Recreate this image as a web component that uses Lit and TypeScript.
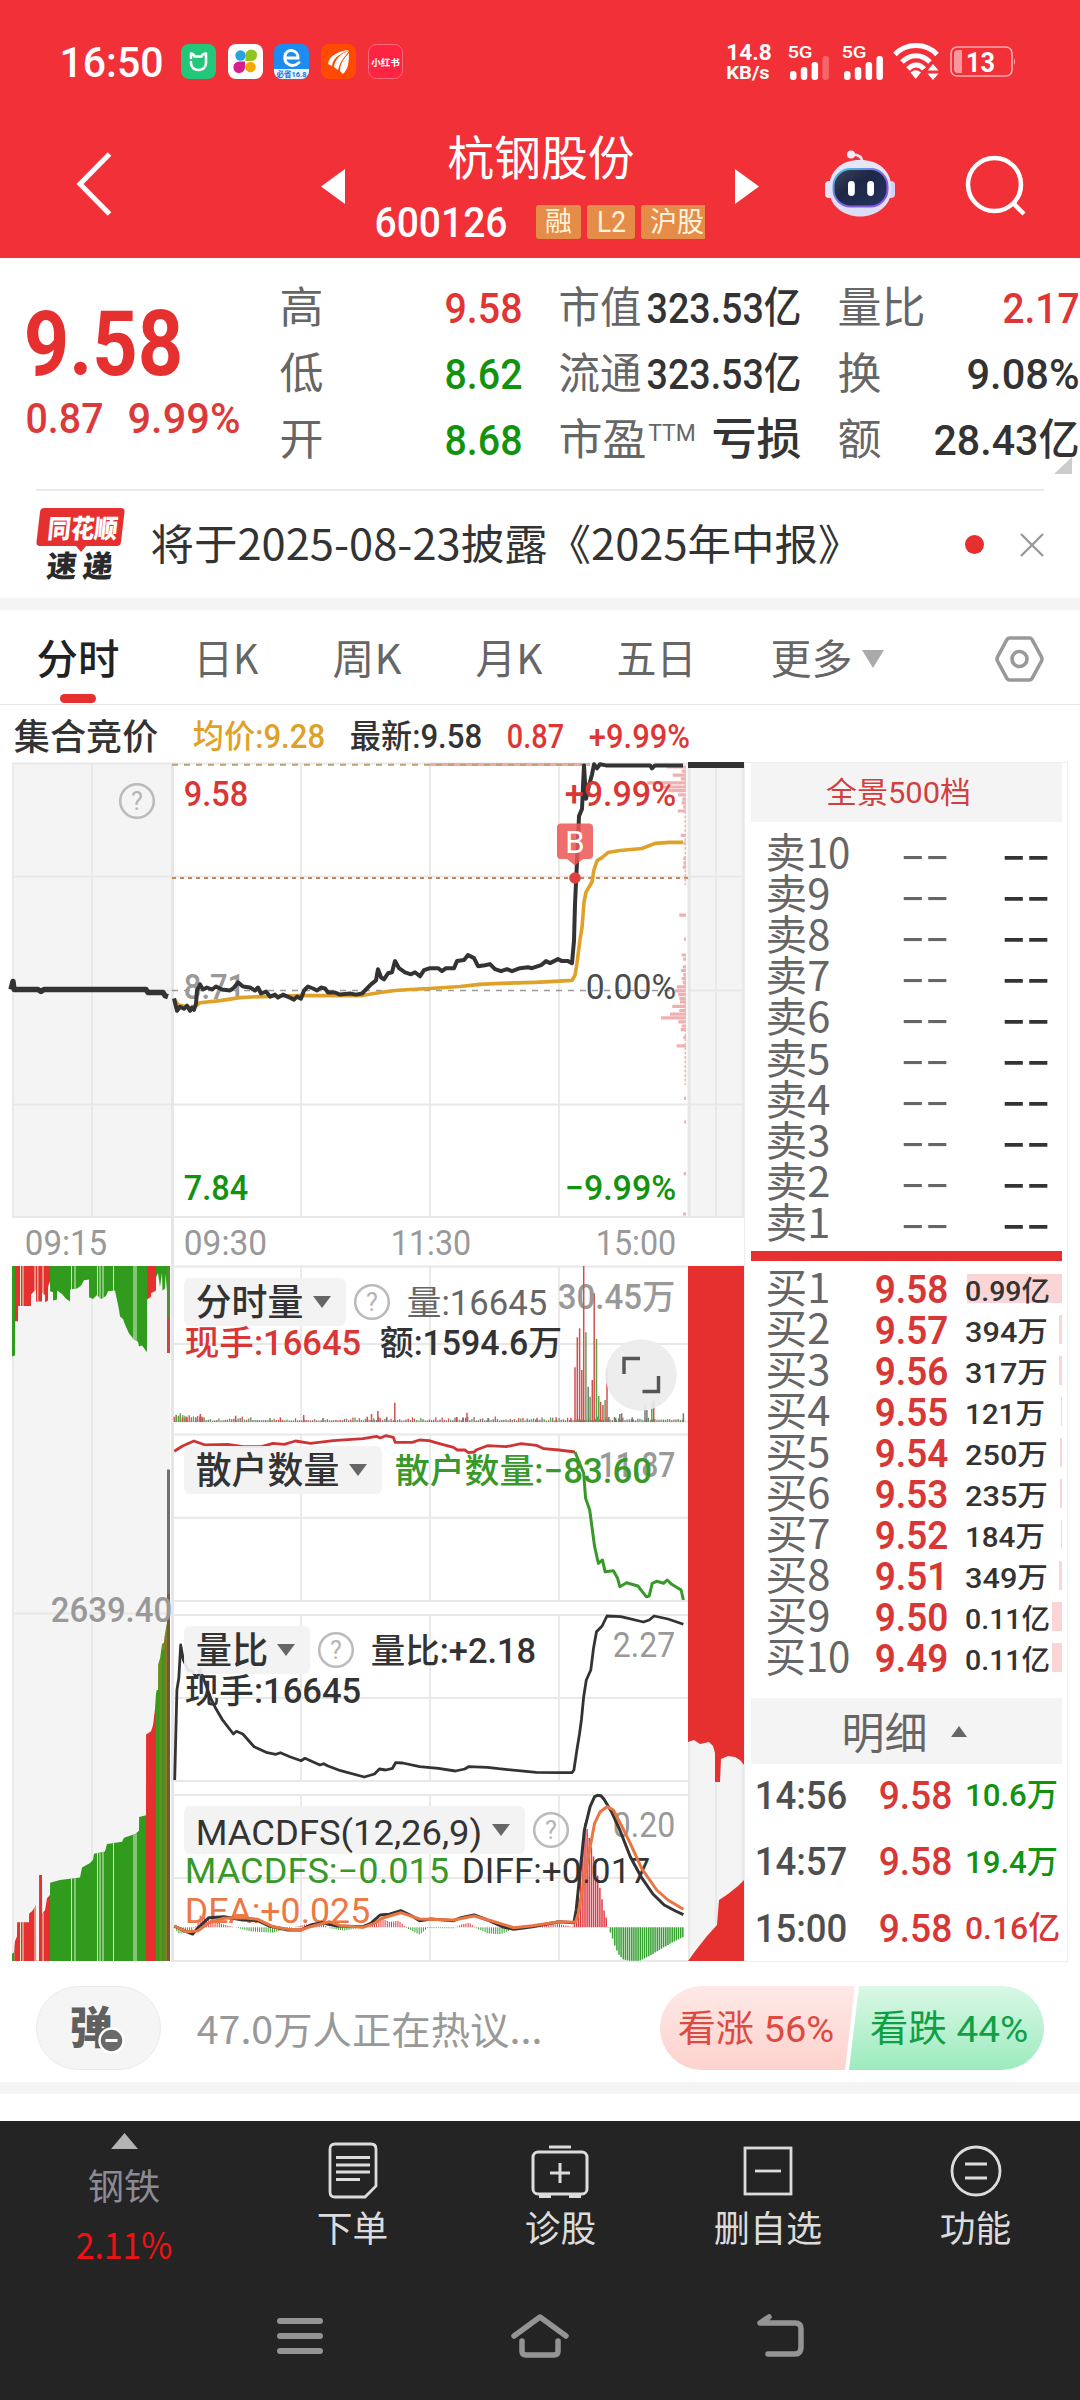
import { LitElement, html, svg, css } from "lit";
import { customElement } from "lit/decorators.js";

type Pt = [number, number];

/** Text set to an exact ink width, used for the condensed numerals. */
const fit = (text: string, w: number, size: number, cls = "") => html`<svg
  class="fit ${cls}" width=${w} height=${size} viewBox="0 0 ${w} ${size}">
  <text x=${-size * 0.035} y=${size * 0.86} font-size=${size}
    textLength=${w + size * 0.07} lengthAdjust="spacingAndGlyphs">${text}</text></svg>`;

/** The same for text inside a chart: x is the ink's left edge, y the baseline. */
const label = (text: string, x: number, right: number, y: number, cls: string, size = 34.5) => svg`<text
  class=${cls} x=${x - size * 0.035} y=${y} font-size=${size}
  textLength=${right - x + size * 0.07} lengthAdjust="spacingAndGlyphs">${text}</text>`;

const path = (pts: Pt[], fx = (n: number) => n, fy = (n: number) => n) =>
  "M" + pts.map(([x, y]) => `${fx(x).toFixed(1)} ${fy(y).toFixed(1)}`).join("L");

const at = (pts: Pt[], x: number) => {
  for (let i = 1; i < pts.length; i++) {
    if (x <= pts[i][0]) {
      const [x0, y0] = pts[i - 1];
      const [x1, y1] = pts[i];
      return x1 === x0 ? y1 : y0 + ((y1 - y0) * (x - x0)) / (x1 - x0);
    }
  }
  return pts[pts.length - 1][1];
};

const noise = (i: number) => {
  const s = Math.sin(i * 12.9898) * 43758.5453;
  return s - Math.floor(s);
};

const PRICE: Pt[] = [
  [174, 995], [177, 1007], [180, 1003], [184, 1005], [187, 1002], [190, 1007], [192, 1004], [194, 1006], [196, 1000],
  [197, 987], [200, 981], [203, 986], [207, 984], [212, 986], [216, 983], [222, 986], [230, 987], [234, 984], [238, 979],
  [243, 983], [250, 984], [255, 987], [258, 984], [261, 990], [266, 988], [270, 993], [275, 991], [278, 994], [283, 991],
  [290, 994], [294, 996], [297, 993], [301, 995], [304, 987], [308, 983], [313, 985], [317, 987], [321, 984], [325, 985],
  [328, 989], [335, 989], [340, 991], [350, 990], [356, 991], [362, 990], [366, 986], [371, 981], [376, 977], [378, 966],
  [381, 974], [384, 976], [388, 970], [392, 969], [395, 958], [399, 965], [405, 969], [411, 971], [415, 969], [420, 973],
  [424, 967], [430, 965], [438, 965], [442, 968], [446, 965], [454, 965], [457, 958], [464, 957], [468, 952], [474, 955],
  [478, 963], [485, 962], [490, 961], [495, 966], [501, 968], [507, 966], [512, 968], [520, 965], [528, 964], [532, 965],
  [541, 962], [546, 958], [550, 960], [554, 958], [558, 956], [562, 958], [568, 958], [572, 960], [574, 938], [575, 902],
  [577, 860], [579, 815], [582, 808], [584, 765], [586, 798], [589, 785], [592, 774], [594, 764], [597, 768], [600, 764],
  [606, 765], [650, 765], [652, 768], [655, 765], [683, 765],
];

const AVERAGE: Pt[] = [
  [174, 995], [178, 1001], [190, 1004], [196, 1002], [200, 999], [220, 997], [240, 994], [260, 993], [300, 992],
  [362, 992], [380, 989], [395, 987], [410, 986], [430, 985], [460, 983], [480, 981], [500, 980], [535, 979], [555, 978],
  [572, 977], [575, 972], [577, 960], [580, 937], [582, 925], [584, 900], [586, 890], [592, 880], [594, 868], [597, 859],
  [602, 856], [608, 851], [620, 849], [642, 847], [655, 842], [670, 841], [683, 841],
];

const AUCTION: Pt[] = [[11, 986], [13, 978], [14, 986], [38, 986], [41, 988], [44, 986], [146, 986], [148, 989], [163, 989], [165, 992], [168, 993]];

/* price distribution: [depth, left edge] */
const CHIPS: Pt[] = [
  [80, 920], [92, 965], [104, 938], [115, 962], [127, 862], [139, 905], [150, 925], [162, 955], [175, 967], [186, 965],
  [210, 953], [198, 970], [282, 962], [305, 970], [350, 970], [364, 970], [376, 968], [518, 958], [589, 972], [636, 965],
  [648, 970], [671, 968], [682, 963], [694, 970], [706, 965], [718, 968], [730, 950], [742, 945], [753, 955], [765, 958],
  [775, 960], [788, 937], [800, 958], [811, 930], [822, 903], [834, 955], [846, 965], [857, 962], [880, 970], [905, 950],
  [1060, 972], [1130, 972], [1283, 971], [1402, 969],
];

const RETAIL_UP: Pt[] = [
  [38, 604], [60, 588], [90, 573], [120, 585], [180, 583], [220, 590], [270, 590], [300, 580], [330, 583], [360, 573],
  [400, 580], [460, 572], [540, 566], [575, 559], [585, 564], [600, 557], [620, 562], [625, 577], [670, 577], [690, 570],
  [715, 572], [740, 580], [780, 592], [790, 600], [810, 600], [820, 608], [835, 606], [840, 600], [870, 587], [920, 590],
  [960, 581], [1000, 586], [1020, 596], [1060, 600], [1103, 606],
];
const RETAIL_DOWN: Pt[] = [
  [1103, 606], [1115, 640], [1126, 670], [1131, 745], [1142, 780], [1155, 890], [1165, 940], [1176, 930], [1183, 965],
  [1205, 962], [1216, 985], [1222, 1010], [1240, 998], [1270, 1008], [1292, 1040], [1300, 1038], [1308, 1000],
  [1320, 994], [1338, 1000], [1348, 990], [1360, 1003], [1385, 1020], [1391, 1050],
];
const RATIO: Pt[] = [
  [39, 540], [45, 270], [50, 235], [55, 135], [62, 180], [75, 210], [85, 213], [95, 228], [102, 225], [107, 208],
  [112, 225], [122, 255], [135, 295], [148, 325], [165, 358], [195, 402], [203, 394], [220, 402], [250, 440],
  [285, 458], [308, 463], [320, 458], [345, 470], [375, 482], [385, 475], [425, 495], [435, 491], [445, 497], [480, 512],
  [543, 531], [570, 522], [583, 507], [600, 510], [618, 505], [626, 488], [645, 489], [690, 500], [740, 505], [785, 513],
  [810, 507], [820, 500], [870, 502], [900, 506], [1000, 517], [1060, 518], [1095, 518], [1100, 510], [1108, 450],
  [1115, 400], [1120, 360], [1126, 290], [1133, 240], [1145, 210], [1152, 145], [1160, 95], [1175, 78], [1188, 48],
  [1225, 50], [1285, 66], [1300, 60], [1313, 48], [1350, 57], [1391, 73],
];
const DIFF: Pt[] = [
  [38, 978], [60, 990], [87, 1002], [100, 985], [130, 953], [170, 950], [220, 960], [260, 962], [290, 978], [340, 990],
  [375, 990], [400, 975], [430, 968], [470, 978], [540, 980], [560, 970], [585, 945], [610, 943], [640, 932], [670, 948],
  [690, 962], [720, 957], [780, 962], [800, 953], [835, 945], [870, 960], [910, 980], [940, 988], [990, 980],
  [1060, 965], [1100, 968], [1106, 930], [1115, 830], [1128, 690], [1143, 620], [1155, 590], [1163, 586], [1172, 587],
  [1180, 598], [1200, 635], [1220, 685], [1250, 770], [1280, 833], [1310, 882], [1340, 915], [1370, 933], [1391, 944],
];
const DEA: Pt[] = [
  [38, 978], [70, 995], [100, 993], [130, 968], [170, 955], [220, 953], [260, 958], [300, 980], [340, 988], [375, 990],
  [400, 980], [450, 965], [480, 977], [540, 982], [570, 970], [590, 955], [640, 938], [690, 957], [780, 960], [835, 948],
  [880, 962], [940, 983], [990, 977], [1060, 965], [1104, 967], [1112, 940], [1125, 850], [1140, 760], [1155, 670],
  [1170, 635], [1188, 620], [1205, 630], [1230, 685], [1250, 730], [1280, 805], [1320, 870], [1350, 900], [1391, 928],
];
const MACD_UP: Pt[] = [
  [1100, 978], [1109, 940], [1115, 860], [1120, 800], [1126, 665], [1132, 672], [1140, 710], [1150, 760], [1160, 805],
  [1170, 870], [1180, 930], [1190, 968],
];
const MACD_DOWN: Pt[] = [
  [1192, 984], [1200, 1005], [1208, 1035], [1218, 1062], [1230, 1078], [1245, 1082], [1275, 1082], [1290, 1074],
  [1310, 1062], [1330, 1048], [1360, 1028], [1391, 1011],
];
const MACD_SMALL: Pt[] = [
  [38, 984], [50, 1000], [75, 998], [95, 980], [107, 946], [130, 958], [170, 974], [200, 982], [240, 994], [300, 998],
  [340, 986], [385, 974], [430, 970], [448, 984], [490, 992], [520, 985], [560, 972], [585, 953], [610, 966], [635, 962],
  [655, 984], [690, 1004], [712, 984], [780, 985], [800, 974], [822, 968], [840, 984], [870, 1000], [905, 1003],
  [940, 986], [1000, 976], [1060, 972], [1095, 980],
];

/* hand-picked volume spikes: [x, depth, colour] */
const SPIKES: [number, number, string][] = [
  [43, 494, "g"], [49, 500, "g"], [54, 490, "g"], [60, 502, "r"], [66, 503, "g"], [71, 500, "r"], [95, 502, "r"],
  [107, 492, "r"], [113, 503, "r"], [201, 497, "r"], [292, 504, "g"], [320, 502, "r"], [382, 495, "r"], [433, 504, "k"],
  [551, 500, "r"], [562, 492, "r"], [568, 505, "g"], [579, 483, "r"], [585, 503, "r"], [602, 504, "k"], [624, 458, "r"],
  [788, 501, "r"], [805, 502, "k"], [816, 488, "r"], [872, 504, "k"], [1002, 503, "r"], [1053, 502, "r"],
  [1092, 503, "r"], [1103, 352, "r"], [1109, 262, "r"], [1115, 235, "r"], [1121, 360, "r"], [1126, 48, "r"],
  [1132, 247, "g"], [1138, 410, "k"], [1143, 440, "g"], [1149, 390, "r"], [1154, 130, "r"], [1160, 267, "g"],
  [1166, 438, "g"], [1171, 455, "r"], [1177, 465, "r"], [1183, 450, "g"], [1188, 355, "r"], [1193, 501, "k"],
  [1211, 503, "k"], [1222, 492, "k"], [1227, 490, "k"], [1255, 502, "k"], [1289, 462, "k"], [1294, 480, "k"],
  [1307, 456, "g"], [1312, 450, "r"], [1391, 490, "k"],
];

const TOP_BARS: Pt[] = [
  [12, 232], [15, 230], [15.1, 155], [18, 155], [18.1, 122], [31, 122], [31.1, 97], [36, 85], [36.1, 112], [42, 112],
  [42.1, 92], [45, 98], [45.1, 114], [48, 110], [48.1, 80], [50, 68], [50.1, 90], [53, 92], [53.1, 110], [57, 108],
  [57.1, 88], [62, 96], [66, 106], [70, 112], [70.1, 86], [77, 84], [81, 78], [84, 66], [89, 64], [89.1, 103],
  [93, 107], [97, 98], [101, 107], [106, 100], [108, 90], [115, 88], [119, 130], [120, 145], [123, 150], [125, 162],
  [129, 182], [134, 195], [138, 200], [139, 210], [142, 208], [146, 220], [147, 222], [147.1, 108], [151, 102],
  [151.1, 94], [156, 88], [156.1, 60], [158, 50], [160, 80], [162, 50], [162.5, 88], [165, 84], [165.5, 52], [167, 90],
];
const BOTTOM_BARS: Pt[] = [
  [12, 1533], [14, 1530], [15, 1505], [17, 1495], [17.1, 1464], [29, 1464], [29.1, 1445], [32, 1440], [36, 1428],
  [36.1, 1548], [39, 1548], [39.1, 1361], [42, 1361], [42.1, 1445], [45, 1438], [47, 1412], [50, 1405], [50.1, 1378],
  [60, 1372], [80, 1367], [82, 1345], [90, 1335], [93, 1328], [94, 1315], [105, 1310], [107, 1294], [122, 1289],
  [124, 1280], [135, 1272], [139, 1265], [139.1, 1235], [146, 1231], [146.1, 1055], [151, 1048], [153, 1035],
  [155, 1000], [156, 965], [158, 960], [158.1, 903], [160, 890], [162, 858], [164, 855], [165, 835], [167, 810],
];
const SLITS = [20.5, 23, 35, 37.8, 43, 71.5, 75, 97.5, 100, 103, 113.5, 134, 136];

const sx = (n: number) => 160 + n / 2.6576;
const upperY = (n: number) => 1250 + n / 3;
const lowerY = (n: number) => 1600 + n / 3;
const leftY = (n: number) => 1250 + n / 2.178;
const priceY = (n: number) => 740 + (n - 740) * 1.0142;

const area = (pts: Pt[], from: number, to: number, base: number) => {
  const inside = pts.filter(([x]) => x > from && x < to);
  return `${path([[from, at(pts, from + 0.01)], ...inside, [to, at(pts, to - 0.01)]], (n) => n, leftY)}L${to} ${base}L${from} ${base}Z`;
};

const help = (x: number, y: number) => svg`
  <circle class="ring" cx=${x} cy=${y} r="16.8" />
  <text class="ring-mark" x=${x} y=${y + 9} font-size="25" text-anchor="middle">?</text>`;

const pill = (text: string, x1: number, y: number, textRight: number) => svg`
  <rect class="pill" x="184" y=${y} width=${x1 - 184} height="48" rx="6" />
  ${label(text, 197, textRight, y + (text[0] === "M" ? 39 : 38), text[0] === "M" ? "ink thin" : "ink", text[0] === "M" ? 34.5 : 37)}
  <path class="dark" d="M${x1 - 33} ${y + 18}h18l-9 12z" />`;

const frame = (top: number, bottom: number) => svg`
  <path class="grid" d="M172 ${top}H688M172 ${bottom}H688M172 ${(top + bottom) / 2}H688
    M301 ${top}V${bottom}M430 ${top}V${bottom}M559 ${top}V${bottom}" />`;

@customElement("intraday-chart")
class IntradayChart extends LitElement {
  static styles = css`
    :host { display: block; width: 744px; height: 1200px; }
    svg { display: block; font-family: Roboto, "Noto Sans CJK SC", sans-serif; font-weight: 500; }
    .shade { fill: #f4f4f4; }
    .grid { fill: none; stroke: #e8e8e8; stroke-width: 1.8; }
    .ink { fill: #333; }
    .mid { fill: #666; font-weight: 400; }
    .zero { fill: #4c4c4c; font-weight: 400; }
    .soft { fill: #999; }
    .thin { font-weight: 400; }
    .up { fill: #d93636; }
    .down { fill: #12930f; }
    .leaf { fill: #38992a; }
    .dea { fill: #ee7843; }
    .dark { fill: #666; }
    .bar-r { fill: #e63030; }
    .bar-g { fill: #319b1d; }
    .line { fill: none; stroke: #333; stroke-linejoin: round; }
    .avg { stroke: #dfa127; }
    .s-up { stroke: #cf3434; }
    .s-down { stroke: #38992a; }
    .s-dea { stroke: #e97642; }
    .chips { stroke: #efb0b0; stroke-width: 3.2; fill: none; }
    .pill { fill: #f2f2f2; opacity: 0.93; }
    .ring { fill: none; stroke: #bbb; stroke-width: 2.6; }
    .ring-mark { fill: #b4b4b4; font-weight: 400; }
    .tag { fill: #ec5555; opacity: 0.85; }
    .tag-text { fill: #fff; font-weight: 400; }
    .v-r { stroke: #d05050; }
    .v-g { stroke: #5da348; }
    .v-k { stroke: #777; }
    .slit { stroke: #d8efd0; stroke-width: 1; }
  `;

  private priceChart() {
    return svg`
      <rect class="shade" x="12" y="763" width="160" height="454" />
      <rect class="shade" x="688" y="763" width="56" height="454" />
      <path class="grid" d="M12 763.5H744M12 876.5H744M12 990.5H172M688 990.5H744M12 1104.5H744M12 1217H744
        M13 763V1217M92 763V1217M301 763V1217M430 763V1217M559 763V1217M716 763V1217M743 763V1217" />
      <path d="M172.5 763V1962M689 763V1217" stroke="#e6e6e6" stroke-width="3" />
      <path d="M172 990.5H688" stroke="#999" stroke-width="1.4" stroke-dasharray="6 6" />
      <path d="M430 764.5H590" stroke="#efaaaa" stroke-width="3" />
      <path d="M172 764.8H590" stroke="#c0a070" stroke-width="2" stroke-dasharray="6 6" />
      <path d="M172 878H688" stroke="#cd8850" stroke-width="2" stroke-dasharray="4 4" />
      <path class="chips" d=${CHIPS.map(([v, x]) => `M${(360 + x / 3).toFixed(1)} ${(740 + v / 2.958).toFixed(1)}H686`).join("")} />
      <path d="M685.3 766V885M685.3 975V1085" stroke="#efb8b8" stroke-width="1.6" stroke-dasharray="3 1.5" />
      ${label("8.71", 185, 244, 999, "soft")}
      <path class="line" stroke-width="5.4" d=${path(AUCTION, undefined, priceY)} />
      <path class="line avg" stroke-width="3.6" d=${path(AVERAGE, undefined, priceY)} />
      <path class="line" stroke-width="4" d=${path(PRICE, undefined, priceY)} />
      <rect class="ink" x="688" y="762" width="56" height="6" />
      ${label("9.58", 185, 247, 806, "up")}
      ${label("+9.99%", 566, 675, 806, "up")}
      ${label("0.00%", 587, 675, 999, "zero")}
      ${label("7.84", 185, 247, 1200, "down")}
      ${label("−9.99%", 566, 675, 1200, "down")}
      ${label("09:15", 26, 106, 1255, "soft thin")}
      ${label("09:30", 185, 266, 1255, "soft thin")}
      ${label("11:30", 392, 470, 1255, "soft thin")}
      ${label("15:00", 597, 675, 1255, "soft thin")}
      ${help(137, 801)}
      <path class="tag" d="M561 823.5H589Q593 823.5 593 827.5V855Q593 859 589 859H583L575 865.5L567 859H561Q557 859 557 855V827.5Q557 823.5 561 823.5Z" />
      <text class="tag-text" x="575" y="852.5" font-size="31" text-anchor="middle">B</text>
      <circle cx="575" cy="878" r="5.8" fill="#e04040" />`;
  }

  private auctionBook() {
    const top = 1266;
    const base = 1961;
    return svg`
      <rect class="shade" x="12" y=${top} width="158" height=${base - top} />
      <path class="grid" d="M13 1266V1961M92 1266V1961M12 1613.5H172" />
      <path class="bar-g" d=${area(TOP_BARS, 12, 15, top)} />
      <path class="bar-r" d=${area(TOP_BARS, 15, 50, top)} />
      <path class="bar-g" d=${area(TOP_BARS, 50, 147, top)} />
      <path class="bar-r" d=${area(TOP_BARS, 147, 156, top)} />
      <path class="bar-g" d=${area(TOP_BARS, 156, 167, top)} />
      <path fill="#548d36" d="M167 1266h3v52h-3z" />
      <path fill="#cc4545" d="M167 1318h3v35h-3z" />
      <path class="bar-g" d=${area(BOTTOM_BARS, 12, 14.5, base)} />
      <path class="bar-r" d=${area(BOTTOM_BARS, 14.5, 50, base)} />
      <path class="bar-g" d=${area(BOTTOM_BARS, 50, 146, base)} />
      <path class="bar-r" d=${area(BOTTOM_BARS, 146, 156, base)} />
      <path fill="#6b8f22" d=${area(BOTTOM_BARS, 156, 167, base)} />
      <path d="M158 1690V1961M163 1650V1961" stroke="#319b1d" stroke-width="3" />
      <path d="M165.5 1636V1961" stroke="#c0562c" stroke-width="1.6" />
      ${SLITS.map((x) => svg`<path class="slit" d="M${x} 1266V${leftY(at(TOP_BARS, x)).toFixed(1)}M${x} ${leftY(at(BOTTOM_BARS, x)).toFixed(1)}V1961" />`)}
      <path fill="#707070" d="M167 1469.5h3v125h-3z" />
      <path fill="#75593f" d="M167 1594h3v367h-3z" />
      ${label("2639.40", 52, 171, 1622, "soft")}
      <path class="shade" d="M688 1266h56v695h-56z" />
      <path class="grid" d="M689 1266V1961M716 1740V1961M743 1740V1961" />
      <path class="bar-r" d="M688 1266H744V1765L740 1760L735 1757L728 1756L721 1759L720 1782H715V1753L713 1746L709 1742L700 1744L694 1740L688 1742Z" />
      <path class="bar-r" d="M688 1961L696 1950L707 1936L717 1925L719 1900L728 1894L738 1886L744 1880V1961Z" />`;
  }

  private volume() {
    const ticks = [];
    for (let i = 0; i < 240; i++) {
      const v = 38 + i * 5.65;
      const kind = noise(i) < 0.36 ? "r" : noise(i) < 0.7 ? "g" : "k";
      const rise = i < 15 ? 6 + noise(i + 9) * 8 : 3 + noise(i + 9) * noise(i + 5) * 9;
      ticks.push(svg`<path class="v-${kind}" stroke-width="1.3" d="M${sx(v).toFixed(1)} 1422v${(-rise / 2).toFixed(1)}" />`);
    }
    return svg`
      ${frame(1266.5, 1421.5)}
      ${ticks}
      ${label("30.45万", 559, 674, 1309, "soft")}
      ${SPIKES.map(([x, v, c]) => svg`<path class="v-${c}" stroke-width="1.5" d="M${sx(x).toFixed(1)} 1422V${upperY(v).toFixed(1)}" />`)}
      ${pill("分时量", 346, 1278, 302)}
      ${help(372, 1302)}
      ${label("量:16645", 408, 546, 1315, "mid")}
      ${label("现手:16645", 186, 360, 1355, "up")}
      ${label("额:1594.6万", 381, 561, 1355, "ink")}
      <circle cx="641" cy="1375" r="35.7" fill="#ebebeb" opacity="0.92" />
      <path d="M640 1358.5H624V1374M642.5 1391.5H658.5V1376" fill="none" stroke="#555" stroke-width="3.4" />`;
  }

  private retail() {
    return svg`
      ${frame(1434.5, 1601)}
      <path class="line s-up" stroke-width="2.8" d=${path(RETAIL_UP, sx, upperY)} />
      <path class="line s-down" stroke-width="3" d=${path(RETAIL_DOWN, sx, upperY)} />
      ${pill("散户数量", 382, 1446, 338)}
      ${label("11.87", 600, 674, 1477, "soft")}
      ${label("散户数量:−83.60", 396, 651, 1482.5, "leaf")}`;
  }

  private ratio() {
    return svg`
      ${frame(1615, 1781)}
      <path class="line" stroke-width="2.8" d=${path(RATIO, sx, lowerY)} />
      ${pill("量比", 310, 1626, 267)}
      ${help(336, 1650)}
      ${label("量比:+2.18", 372, 535, 1663, "ink")}
      ${label("2.27", 614, 674, 1657, "soft thin")}
      ${label("现手:16645", 186, 360, 1703, "ink")}`;
  }

  private macd() {
    const bars = [];
    for (let v = 39; v < 1392; v += 5.65) {
      const src = v < 1100 ? MACD_SMALL : v < 1191 ? MACD_UP : MACD_DOWN;
      const tip = at(src, v);
      const strong = v >= 1100;
      bars.push(svg`<path stroke=${tip < 982 ? "#e03a45" : "#35a030"} stroke-width=${strong ? 1.5 : 1}
        d="M${sx(v).toFixed(1)} 1927.3V${lowerY(tip).toFixed(1)}" />`);
    }
    return svg`
      ${frame(1795, 1961)}
      ${bars}
      ${label("0.20", 614, 674, 1837, "soft thin")}
      ${pill("MACDFS(12,26,9)", 525, 1806, 481)}
      ${help(551, 1830)}
      ${label("MACDFS:−0.015", 186, 448, 1883, "leaf thin")}
      ${label("DIFF:+0.017", 463, 649, 1883, "ink thin")}
      ${label("DEA:+0.025", 186, 369, 1922.7, "dea thin")}
      <path class="line" stroke-width="3" d=${path(DIFF, sx, lowerY)} />
      <path class="line s-dea" stroke-width="3" d=${path(DEA, sx, lowerY)} />`;
  }

  render() {
    return html`<svg width="744" height="1200" viewBox="0 762 744 1200">
      ${this.priceChart()} ${this.auctionBook()} ${this.volume()} ${this.retail()} ${this.ratio()} ${this.macd()}
    </svg>`;
  }
}

const BUYS: [string, string, number, number][] = [
  ["9.58", "0.99亿", 83, 95], ["9.57", "394万", 81, 3], ["9.56", "317万", 81, 3], ["9.55", "121万", 78, 1],
  ["9.54", "250万", 81, 2], ["9.53", "235万", 81, 2], ["9.52", "184万", 78, 1], ["9.51", "349万", 81, 3],
  ["9.50", "0.11亿", 83, 10], ["9.49", "0.11亿", 83, 10],
];
const TRADES: [string, string, string, number][] = [
  ["14:56", "10.6万", "down", 91], ["14:57", "19.4万", "down", 91], ["15:00", "0.16亿", "up", 93],
];

@customElement("order-book")
class OrderBook extends LitElement {
  static styles = css`
    :host { display: block; box-sizing: border-box; width: 324px; height: 1200px; padding: 0 6px; border: 1px solid #eee;
      font-family: Roboto, "Noto Sans CJK SC", sans-serif; color: #666; background: #fff; }
    .fit { display: block; flex: none; overflow: visible; fill: currentColor; }
    .head { height: 59px; width: 311px; background: #f4f4f4; display: flex; align-items: center; justify-content: center;
      padding-right: 16px; box-sizing: border-box; color: #d04040; }
    .sells { padding-top: 11px; }
    .row { display: flex; align-items: center; height: 41.1px; width: 311px; padding-left: 16px; box-sizing: border-box; }
    .lead { width: 133px; flex: none; font-family: "Noto Sans CJK SC", sans-serif; }
    .sells .lead { width: 135px; }
    .dash { width: 101px; flex: none; font-family: "Noto Sans CJK SC", sans-serif; }
    .dash.strong { width: 46px; color: #333; font-weight: 500; }
    .rule { width: 311px; height: 10px; background: #e63030; margin: 7px 0 7px; }
    .buys .row { height: 41px; }
    .buys .lead { width: 109px; }
    .price { width: 90px; flex: none; color: #d93636; font-weight: 600; }
    .amount { flex: 1; height: 29px; display: flex; align-items: center; justify-content: space-between; position: relative; }
    .amount .fit { position: relative; top: 2px; color: #333; font-weight: 500; }
    .depth { position: absolute; right: 0; top: 0; height: 29px; background: #fad5d5; }
    .detail { margin-top: 20px; height: 66px; width: 311px; background: #f4f4f4; display: flex; align-items: center;
      gap: 25px; padding: 5px 0 0 92px; box-sizing: border-box; }
    .caret { border: 8px solid transparent; border-top: 0; border-bottom: 11px solid #666; margin-top: -4px; }
    .trades { margin-top: -3px; }
    .trade { display: flex; align-items: center; height: 66.5px; padding-left: 5px; font-weight: 500; color: #4f4f4f; }
    .trade .cell-time { width: 124px; }
    .trade .cell-price { width: 86px; color: #d93636; }
    .up { color: #d93636; }
    .down { color: #12930f; }
  `;

  render() {
    return html`
      <div class="head">${fit("全景500档", 143, 29.5)}</div>
      <div class="sells">
        ${[10, 9, 8, 7, 6, 5, 4, 3, 2, 1].map((n) => html`<div class="row">
          <div class="lead">${fit("卖" + n, n > 9 ? 82 : 62, 41)}</div>
          <div class="dash">${fit("--", 46, 44)}</div>
          <div class="dash strong">${fit("--", 46, 44)}</div>
        </div>`)}
      </div>
      <div class="rule"></div>
      <div class="buys">
        ${BUYS.map(([price, amount, w, depth], i) => html`<div class="row">
          <div class="lead">${fit("买" + (i + 1), i > 8 ? 82 : 62, 41)}</div>
          <div class="price">${fit(price, 71, 39)}</div>
          <div class="amount"><div class="depth" style="width:${depth}px"></div>${fit(amount, w, 28.5)}</div>
        </div>`)}
      </div>
      <div class="detail">${fit("明细", 83, 43)}<span class="caret"></span></div>
      <div class="trades">
        ${TRADES.map(([time, amount, dir, w]) => html`<div class="trade">
          <div class="cell-time">${fit(time, 90, 39)}</div>
          <div class="cell-price">${fit("9.58", 71, 39)}</div>
          <div class=${dir}>${fit(amount, w, 32)}</div>
        </div>`)}
      </div>`;
  }
}

const signal = (full: boolean) => html`<span class="signal">${fit("5G", 24, 17)}<svg width="39" height="24" viewBox="0 0 39 24" fill="#fff">
  <rect y="15" width="6.5" height="9" rx="3" /><rect x="10.8" y="11" width="6.5" height="13" rx="3" />
  <rect x="21.6" y="6" width="6.5" height="18" rx="3" /><rect x="32.4" width="6.5" height="24" rx="3" opacity=${full ? 1 : 0.25} /></svg></span>`;

const TABS: [string, number][] = [["分时", 80], ["日K", 62], ["周K", 66], ["月K", 64], ["五日", 77], ["更多", 79]];

@customElement("app-root")
class AppRoot extends LitElement {
  static styles = css`
    :host { display: block; width: 1080px; height: 2400px; overflow: hidden; background: #fff;
      font-family: Roboto, "Noto Sans CJK SC", sans-serif; color: #333; }
    svg { display: block; flex: none; }
    .fit { overflow: visible; fill: currentColor; }
    .cjk { font-family: "Noto Sans CJK SC", sans-serif; }
    .up { color: #e03535; }
    .down { color: #12930f; }
    .top { background: #f13038; color: #fff; height: 258px; }
    .status { display: flex; align-items: center; height: 122px; padding: 0 64px 0 61px; box-sizing: border-box; font-weight: 500; }
    .apps { display: flex; gap: 11.7px; margin-left: 19px; flex: 1; }
    .speed { display: flex; flex-direction: column; font-weight: 700; margin-right: 17px; }
    .signal { display: flex; flex-direction: column; height: 37px; justify-content: space-between; margin-right: 13px; }
    .signal svg:last-child { margin: -6px 0 0 2px; }
    .wifi { margin: 0 11px 0 -3px; }
    .bar { display: flex; align-items: center; height: 124px; padding-left: 76px; }
    .prev { margin: 5px 0 0 209px; }
    .next { margin: 5px 0 0 30px; }
    .name { width: 329px; height: 110px; margin-left: 31px; padding-top: 6px; display: flex; flex-direction: column; align-items: center; box-sizing: border-box; }
    .code { display: flex; align-items: center; align-self: stretch; margin-top: 18px; gap: 6px; }
    .code > .fit { margin-right: 24px; font-weight: 500; }
    .badge { height: 34px; border-radius: 3px; background: #e58d48; color: #fff3dc; display: flex; align-items: center; justify-content: center; }
    .badge.rong { width: 45px; }
    .badge.level { width: 48px; }
    .badge.hu { width: 64px; border-radius: 3px 0 0 3px; justify-content: flex-start; padding-left: 10px; box-sizing: border-box; }
    .robot { margin-left: 65px; }
    .search { margin-left: 67px; }
    .quote { display: grid; grid-template-columns: 254px 240px 39px 240px 39px 239px; height: 231px; padding: 16px 0 17px 27px;
      box-sizing: border-box; position: relative; }
    .last { padding-top: 23px; font-weight: 700; color: #e63030; }
    .change { display: flex; gap: 27px; margin-top: 8px; color: #dc3a3a; font-weight: 500; }
    .metrics { display: grid; grid-template-rows: repeat(3, 66px); }
    .metric { display: flex; align-items: center; justify-content: space-between; color: #666; }
    .metric > .fit:last-child { font-weight: 500; }
    .metric .ink { color: #333; }
    .pe { display: flex; gap: 4px; }
    .pe .fit:last-child { margin-top: 3px; }
    .corner { position: absolute; right: 8px; bottom: 15px; }
    .news { display: flex; align-items: center; height: 109px; margin: 0 36px; border-top: 2px solid #ebebeb; box-sizing: border-box; }
    .headline { margin-left: 27px; flex: 1; }
    .dot { width: 19px; height: 19px; border-radius: 50%; background: #e63030; margin-right: 36px; }
    .band { height: 12px; background: #f4f4f4; }
    .tabs { display: flex; align-items: center; height: 95px; padding: 4px 36px 0 38px; border-bottom: 1.5px solid #e6e6e6; box-sizing: border-box; color: #666; }
    .tab { position: relative; margin-right: 77px; }
    .tab.on { color: #222; font-weight: 500; }
    .tab.on::after { content: ""; position: absolute; left: 22px; top: 55px; width: 36px; height: 9px; border-radius: 5px; background: #e63030; }
    .tab:last-of-type { margin-right: 11px; }
    .gear { margin-left: auto; }
    .legend { display: flex; align-items: center; height: 57px; padding: 6px 0 0 15px; gap: 27px; box-sizing: border-box; font-weight: 500; }
    .legend .avg { color: #dfa127; margin-left: 10px; }
    .board { display: flex; height: 1200px; }
    .talk { display: flex; align-items: center; height: 120px; padding: 12px 36px 0; box-sizing: border-box; }
    .danmu { width: 125px; height: 84px; border-radius: 42px; background: #f5f5f5; border: 1px solid #ebebeb; box-sizing: border-box;
      display: flex; align-items: center; padding-left: 34px; position: relative; color: #606060; font-weight: 900; }
    .mute { position: absolute; left: 61px; top: 40px; }
    .hot { color: #999; margin-left: 37px; padding-top: 3px; flex: 1; }
    .votes { display: flex; width: 384px; height: 84px; border-radius: 42px; overflow: hidden; }
    .vote { display: flex; align-items: center; box-sizing: border-box; }
    .bull { width: 199px; padding-left: 19px; color: #dd4b40; background: linear-gradient(#fee9e7, #fdd2cd); clip-path: polygon(0 0, 195px 0, 185px 100%, 0 100%); }
    .bear { width: 199px; margin-left: -14px; padding-left: 26px; color: #0fa045; background: linear-gradient(#daf8e6, #9cebbe); clip-path: polygon(14px 0, 100% 0, 100% 100%, 4px 100%); }
    .gap { height: 27px; }
    .dock { height: 279px; background: #242424; color: #dcdcdc; }
    .tools { display: grid; grid-template-columns: 248px 209px 206px 210px 205px; height: 160px; }
    .tool { display: flex; flex-direction: column; align-items: center; padding-top: 21px; gap: 12px; }
    .sector { display: flex; flex-direction: column; align-items: center; padding-top: 12px; color: #8b8a95; }
    .sector .fit:nth-child(2) { margin-top: 20px; }
    .sector .fit:nth-child(3) { margin-top: 22px; color: #f01212; }
    .keys { display: flex; align-items: center; padding: 32px 0 0 277px; }
    .keys svg + svg { margin-left: 188px; }
    .keys svg:last-child { margin-left: 187px; }
  `;

  private statusBar() {
    return html`<div class="status">
      ${fit("16:50", 101, 43)}
      <div class="apps">
        <svg width="35" height="35" viewBox="0 0 35 35"><rect width="35" height="35" rx="8" fill="#22c77a" />
          <path d="M10 9.5V14M10 9.5C12 9.5 13 11 13.5 12.5H20.5C21 11 22 9.5 25 9.5V19C25 23.5 21.5 26 17.5 26C13.5 26 10 23.5 10 19V18" fill="none" stroke="#fff" stroke-width="2.6" stroke-linecap="round" stroke-linejoin="round" /></svg>
        <svg width="35" height="35" viewBox="0 0 35 35"><rect width="35" height="35" rx="8" fill="#fff" />
          <circle cx="12.5" cy="11.5" r="5.2" fill="#27a4e0" /><path d="M17.5 17V11.5A5.8 5.8 0 1 1 23 17Z" fill="#8fc31f" />
          <path d="M17 17.5V23A5.8 5.8 0 1 1 11.5 17.5Z" fill="#d81e8a" /><circle cx="22.5" cy="23" r="5.2" fill="#f6a800" /></svg>
        <svg width="35" height="35" viewBox="0 0 35 35"><rect width="35" height="35" rx="8" fill="#1d8cf0" />
          <path d="M0 25H35V27A8 8 0 0 1 27 35H8A8 8 0 0 1 0 27Z" fill="#eaf5ff" />
          <path d="M12 14H24C24.5 5.5 12.500 3.500 11 12C9.500 20.500 19 24.500 25 18.500" fill="none" stroke="#fff" stroke-width="3" stroke-linecap="round" />
          <text x="17.5" y="33" font-size="7.5" font-weight="700" text-anchor="middle" fill="#1d6fe0">必省16.8</text></svg>
        <svg width="35" height="35" viewBox="0 0 35 35"><rect width="35" height="35" rx="8" fill="#ff4a00" />
          <path d="M7 20C8 12 17 7 28 6C22 9 12 12 11 22ZM13 23C14 15 20 9 28 7C24 13 20 15 17 26ZM19 27C19 20 23 14 28 9C28 18 27 26 22 30Z" fill="#fff" /></svg>
        <svg width="35" height="35" viewBox="0 0 35 35"><rect x=".5" y=".5" width="34" height="34" rx="8" fill="#ff2442" stroke="#ff6a78" />
          <text x="17.5" y="21.500" font-size="9.5" font-weight="700" text-anchor="middle" fill="#fff">小红书</text></svg>
      </div>
      <div class="speed">${fit("14.8", 44, 22)}${fit("KB/s", 42, 19)}</div>
      ${signal(false)}${signal(true)}
      <svg class="wifi" width="46" height="38" viewBox="0 0 46 38"><g fill="none" stroke="#fff" stroke-width="5">
        <path d="M2 12.5C13 .5 33 .5 44 12.5" /><path d="M9 20C17 11.5 29 11.5 37 20" /><path d="M15 27C20 21.5 27 21.5 31 27" /></g>
        <path d="M17.5 30.5Q22.5 26 28 30.5L22.7 37Z" fill="#fff" />
        <path d="M40 22l5.500 6.500h-11zM40 38l5.500-6.500h-11z" fill="#fff" /></svg>
      <svg width="66" height="31" viewBox="0 0 66 31"><rect x="1" y="1" width="61" height="29" rx="6" fill="none" stroke="#fff" stroke-opacity=".6" stroke-width="1.6" />
        <path d="M4 8Q4 4 8 4H12V27H8Q4 27 4 23Z" fill="#fff" opacity=".5" /><path d="M64 12Q66 15.500 64 19Z" fill="#fff" opacity=".6" />
        <text x="16" y="25.5" font-size="27" font-weight="700" fill="#fff" textLength="29" lengthAdjust="spacingAndGlyphs">13</text></svg>
    </div>`;
  }

  private titleBar() {
    return html`<div class="bar">
      <svg width="36" height="66" viewBox="0 0 36 66"><path d="M33.5 3L4 33L33.5 63" fill="none" stroke="#fff" stroke-width="5" /></svg>
      <svg class="prev" width="24" height="35" viewBox="0 0 24 35"><path d="M24 0V35L0 17.5Z" fill="#fff" /></svg>
      <div class="name">
        ${fit("杭钢股份", 184, 47)}
        <div class="code">${fit("600126", 130, 43)}
          <span class="badge rong">${fit("融", 25, 27)}</span><span class="badge level">${fit("L2", 27, 29)}</span><span
            class="badge hu">${fit("沪股", 52, 28)}</span></div>
      </div>
      <svg class="next" width="24" height="35" viewBox="0 0 24 35"><path d="M0 0V35L24 17.5Z" fill="#fff" /></svg>
      <svg class="robot" width="72" height="68" viewBox="0 0 72 68">
        <defs>
          <linearGradient id="face" x1="0" y1="0" x2="1" y2="1"><stop stop-color="#424659" /><stop offset=".4" stop-color="#1d2747" /><stop offset="1" stop-color="#26345e" /></linearGradient>
          <linearGradient id="rim" x1="0" y1="0" x2="1" y2="1"><stop stop-color="#3fd2ee" /><stop offset=".45" stop-color="#7b6ae2" /><stop offset="1" stop-color="#8a55e6" /></linearGradient>
          <linearGradient id="shell" x1="0" y1="0" x2="0" y2="1"><stop stop-color="#e9e7f4" /><stop offset="1" stop-color="#dcdcf8" /></linearGradient>
        </defs>
        <path d="M38 12C38.500 7 34 4.500 29 4.500" fill="none" stroke="#e6e2f4" stroke-width="2.600" /><circle cx="27" cy="4.500" r="4" fill="#eeecf6" />
        <rect x="1" y="31" width="8" height="17" rx="4" fill="#e6e4f8" /><rect x="63" y="31" width="8" height="17" rx="4" fill="#d4d2f4" />
        <path d="M36 10C54 10 67 20 67.500 38C68 56 52 66.500 36 66.500C20 66.500 4.500 56 5 38C5.500 20 18 10 36 10Z" fill="url(#shell)" />
        <rect x="9.500" y="19" width="54" height="37.500" rx="17" fill="url(#face)" stroke="url(#rim)" stroke-width="2" />
        <rect x="24" y="31" width="6.800" height="15" rx="3.400" fill="#fff" /><rect x="43.200" y="31" width="6.800" height="15" rx="3.400" fill="#fff" /></svg>
      <svg class="search" width="64" height="64" viewBox="0 0 64 64"><circle cx="31.5" cy="32.5" r="26.500" fill="none" stroke="#fff" stroke-width="4.500" />
        <path d="M50.500 51.500L61 62" stroke="#fff" stroke-width="4.500" /></svg>
    </div>`;
  }

  render() {
    return html`
      <header class="top">${this.statusBar()}${this.titleBar()}</header>
      <section class="quote">
        <div class="last">${fit("9.58", 153, 91)}<div class="change">${fit("0.87", 75, 43)}${fit("9.99%", 110, 43)}</div></div>
        <div class="metrics">
          <div class="metric">${fit("高", 41, 43)}${fit("9.58", 75, 43, "up")}</div>
          <div class="metric">${fit("低", 41, 43)}${fit("8.62", 75, 43, "down")}</div>
          <div class="metric">${fit("开", 41, 43)}${fit("8.68", 75, 43, "down")}</div>
        </div>
        <span></span>
        <div class="metrics">
          <div class="metric">${fit("市值", 80, 43)}${fit("323.53亿", 152, 43, "ink")}</div>
          <div class="metric">${fit("流通", 80, 43)}${fit("323.53亿", 152, 43, "ink")}</div>
          <div class="metric"><span class="pe">${fit("市盈", 85, 43)}${fit("TTM", 46, 23)}</span>${fit("亏损", 87, 44, "ink")}</div>
        </div>
        <span></span>
        <div class="metrics">
          <div class="metric">${fit("量比", 85, 43)}${fit("2.17", 74, 43, "up")}</div>
          <div class="metric">${fit("换", 41, 43)}${fit("9.08%", 110, 43, "ink")}</div>
          <div class="metric">${fit("额", 41, 43)}${fit("28.43亿", 143, 43, "ink")}</div>
        </div>
        <svg class="corner" width="18" height="17" viewBox="0 0 18 17"><path d="M18 0V17H0Z" fill="#ccc" /></svg>
      </section>
      <section class="news">
        <svg width="89" height="74" viewBox="0 0 89 74">
          <path d="M8 0H85Q89 0 88.500 4L85 34Q84.500 38 81 38H50L45 44L40 38H4Q0 38 .5 34L4 4Q4.500 0 8 0Z" fill="#e63030" />
          <g font-family="Noto Sans CJK SC" font-weight="900"><text x="14" y="30" font-size="26" fill="#fff" textLength="70" lengthAdjust="spacingAndGlyphs" transform="skewX(-6)">同花顺</text>
          <text x="17" y="69" font-size="30" fill="#2a2a2a" textLength="66" transform="skewX(-6)">速递</text></g></svg>
        <div class="headline cjk">${fit("将于2025-08-23披露《2025年中报》", 708, 42.5)}</div>
        <span class="dot"></span>
        <svg width="24" height="24" viewBox="0 0 24 24"><path d="M1 1L23 23M23 1L1 23" stroke="#999" stroke-width="2.400" /></svg>
      </section>
      <div class="band"></div>
      <nav class="tabs cjk">
        ${TABS.map(([t, w], i) => html`<div class="tab ${i === 0 ? "on" : ""}">${fit(t, w, 41)}</div>`)}
        <svg width="22" height="18" viewBox="0 0 22 18"><path d="M0 0H22L11 18Z" fill="#aaa" /></svg>
        <svg class="gear" width="49" height="46" viewBox="0 0 49 46"><path d="M14.500 2H34.500Q36 2 37 3.500L46.500 21Q47.500 23 46.500 25L37 42.500Q36 44 34.500 44H14.500Q13 44 12 42.500L2.500 25Q1.500 23 2.500 21L12 3.500Q13 2 14.500 2Z" fill="none" stroke="#999" stroke-width="3.600" />
          <circle cx="24.500" cy="23" r="7.500" fill="none" stroke="#999" stroke-width="3.600" /></svg>
      </nav>
      <div class="legend">${fit("集合竞价", 142, 36)}
        <span class="avg">${fit("均价:9.28", 130, 32.5)}</span>${fit("最新:9.58", 130, 32.5)}${fit("0.87", 55, 32.5, "up")}${fit("+9.99%", 99, 32.5, "up")}</div>
      <section class="board"><intraday-chart></intraday-chart><order-book></order-book></section>
      <section class="talk">
        <div class="danmu cjk">${fit("弹", 40, 44)}
          <svg class="mute" width="27" height="27" viewBox="0 0 27 27"><circle cx="13.500" cy="13.500" r="12" fill="#6a6a6a" stroke="#fff" stroke-width="2.500" /><path d="M7.500 13.500H19.500" stroke="#fff" stroke-width="3" /></svg></div>
        <div class="hot cjk">${fit("47.0万人正在热议...", 343, 38)}</div>
        <div class="votes"><div class="vote bull">${fit("看涨 56%", 154, 37)}</div><div class="vote bear">${fit("看跌 44%", 156, 37)}</div></div>
      </section>
      <div class="band"></div>
      <div class="gap"></div>
      <footer class="dock">
        <div class="tools cjk">
          <div class="sector"><svg width="27" height="16" viewBox="0 0 27 16"><path d="M13.500 0L27 16H0Z" fill="#b4b4b4" /></svg>
            ${fit("钢铁", 70, 36)}${fit("2.11%", 94, 37)}</div>
          <div class="tool"><svg width="50" height="57" viewBox="0 0 50 57" fill="none" stroke="#dcdcdc" stroke-width="2.800">
            <path d="M7 2H43Q48 2 48 7V44L37 55H7Q2 55 2 50V7Q2 2 7 2ZM8 15.500H42M8 23H42M8 30H42M8 37.500H32" /></svg>${fit("下单", 69, 36)}</div>
          <div class="tool"><svg width="58" height="57" viewBox="0 0 58 57" fill="none" stroke="#dcdcdc" stroke-width="3">
            <rect x="2" y="10" width="54" height="42" rx="5" /><path d="M18 5H40M19 31H39M29 21V41M8 54.500H20M38 54.500H50" /></svg>${fit("诊股", 69, 36)}</div>
          <div class="tool"><svg width="50" height="57" viewBox="0 0 50 57" fill="none" stroke="#dcdcdc" stroke-width="2.800">
            <rect x="2" y="6" width="46" height="46" /><path d="M12 29H38" /></svg>${fit("删自选", 106, 36)}</div>
          <div class="tool"><svg width="54" height="57" viewBox="0 0 54 57" fill="none" stroke="#dcdcdc" stroke-width="2.800">
            <circle cx="27" cy="29" r="24" /><path d="M16 22H38M16 36H38" /></svg>${fit("功能", 69, 36)}</div>
        </div>
        <div class="keys">
          <svg width="46" height="44" viewBox="0 0 46 44" fill="none" stroke="#949494" stroke-width="6" stroke-linecap="round"><path d="M3 7H43M3 22H43M3 37H43" /></svg>
          <svg width="58" height="46" viewBox="0 0 58 46" fill="none" stroke="#949494" stroke-width="5.500" stroke-linecap="round" stroke-linejoin="round"><path d="M3 23L29 4L55 23M11 28V38Q11 42 15 42H43Q47 42 47 38V28" /></svg>
          <svg width="49" height="46" viewBox="0 0 49 46" fill="none" stroke="#949494" stroke-width="5.500" stroke-linecap="round" stroke-linejoin="round"><path d="M13 4L4 10H39Q45 10 45 16V34Q45 41 39 41H12" /></svg>
        </div>
      </footer>`;
  }
}
